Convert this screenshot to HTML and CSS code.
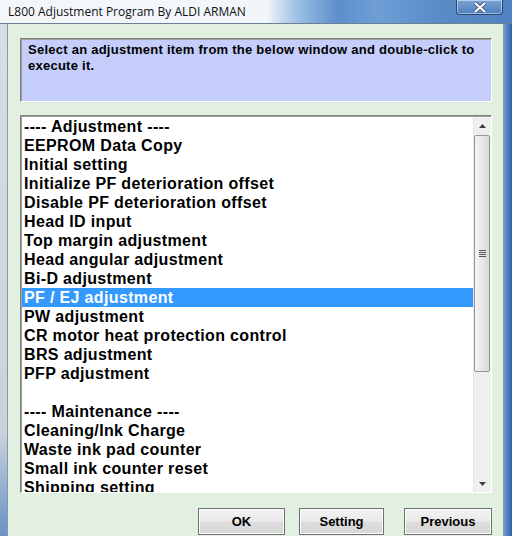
FILE: index.html
```html
<!DOCTYPE html>
<html lang="en">
<head>
    <meta charset="UTF-8">
    <title>L800 Adjustment Program By ALDI ARMAN</title>
    <link rel="stylesheet" href="styles.css">
</head>
<body>

<div class="window">
    <!-- Заголовок окна -->
    <div class="titlebar">
        <span class="title">L800 Adjustment Program By ALDI ARMAN</span>
        <div class="close">
            <svg width="14" height="11" viewBox="0 0 14 11">
                <path d="M2 1 L12 10 M12 1 L2 10" stroke="#3a4d66" stroke-width="3.6"/>
                <path d="M2 1 L12 10 M12 1 L2 10" stroke="#fff" stroke-width="2.2"/>
            </svg>
        </div>
    </div>

    <div class="frame">
        <div class="edge-left"></div>

        <div class="client">
            <div class="info">
                Select an adjustment item from the below window and double-click to execute it.
            </div>

            <div class="list">
                <ul class="items">
                    <li>---- Adjustment ----</li>
                    <li>EEPROM Data Copy</li>
                    <li>Initial setting</li>
                    <li>Initialize PF deterioration offset</li>
                    <li>Disable PF deterioration offset</li>
                    <li>Head ID input</li>
                    <li>Top margin adjustment</li>
                    <li>Head angular adjustment</li>
                    <li>Bi-D adjustment</li>
                    <li class="selected">PF / EJ adjustment</li>
                    <li>PW adjustment</li>
                    <li>CR motor heat protection control</li>
                    <li>BRS adjustment</li>
                    <li>PFP adjustment</li>
                    <li>&nbsp;</li>
                    <li>---- Maintenance ----</li>
                    <li>Cleaning/Ink Charge</li>
                    <li>Waste ink pad counter</li>
                    <li>Small ink counter reset</li>
                    <li>Shipping setting</li>
                </ul>

                <!-- Полоса прокрутки -->
                <div class="scrollbar">
                    <div class="arrow">
                        <svg width="7" height="4" viewBox="0 0 7 4"><path d="M0 4 L3.5 0 L7 4 Z" fill="#404040"/></svg>
                    </div>
                    <div class="track">
                        <div class="thumb">
                            <span class="grip"></span>
                        </div>
                    </div>
                    <div class="arrow">
                        <svg width="7" height="4" viewBox="0 0 7 4"><path d="M0 0 L3.5 4 L7 0 Z" fill="#404040"/></svg>
                    </div>
                </div>
            </div>

            <div class="buttons">
                <button class="btn btn-ok">OK</button>
                <button class="btn btn-setting">Setting</button>
                <button class="btn btn-prev">Previous</button>
            </div>
        </div>

        <div class="edge-right"></div>
    </div>
</div>

</body>
</html>
```

FILE: styles.css
```css
/* Основные стили */
body {
    margin: 0;
    width: 512px;
    height: 536px;
    overflow: hidden;
    font-family: "Liberation Sans", Arial, sans-serif;
    background: #e2f0e2;
}

.window {
    display: flex;
    flex-direction: column;
    height: 536px;
}

/* Заголовок */
.titlebar {
    height: 23px;
    display: flex;
    align-items: flex-start;
    background: linear-gradient(90deg, #f4f7fa 0%, #f2f6fa 52%, #9cc0e4 58%, #5d8fcb 66%, #6f9fd6 74%, #5a8cc8 85%, #4f82c0 100%);
    border-bottom: 1px solid #6c7f95;
}
.title {
    margin: 3px 0 0 8px;
    font-family: "Open Sans", "Noto Sans", sans-serif;
    font-size: 12px;
    color: #111;
    flex: 1;
}
.close {
    width: 45px;
    height: 14px;
    margin-right: 9px;
    display: flex;
    align-items: center;
    justify-content: center;
    border: 1px solid #2d4a6e;
    border-top: none;
    border-radius: 0 0 4px 4px;
    background: linear-gradient(#7aa3d3, #4d7fbd);
    box-shadow: inset 0 0 0 1px rgba(255, 255, 255, 0.45);
}

.frame {
    flex: 1;
    display: flex;
}
.edge-left {
    width: 7px;
    border-right: 1px solid #8a97a6;
    background: linear-gradient(#d7dde4, #c9d2dc 80%, #7fa2cc 95%, #6d93c4);
}
.edge-right {
    width: 8px;
    border-left: 1px solid #8a97a6;
    background: linear-gradient(90deg, #6f9ad0, #4c7fc0 50%, #2f5f9f);
}

.client {
    flex: 1;
    padding: 14px 11px 0 12px;
    background: #e2f0e2;
}

/* Блок с подсказкой */
.info {
    height: 59px;
    padding: 3px 6px 0 7px;
    background: #c5cdfb;
    border: 1px solid;
    border-color: #808080 #ffffff #ffffff #808080;
    box-shadow: inset 1px 1px 0 #a0a0a0;
    font-size: 13px;
    font-weight: bold;
    letter-spacing: 0.25px;
    line-height: 16px;
    color: #000;
}

/* Список */
.list {
    margin-top: 13px;
    height: 376px;
    display: flex;
    background: #fff;
    border: 1px solid;
    border-color: #808080 #ffffff #ffffff #808080;
    box-shadow: inset 1px 1px 0 #a0a0a0;
}
.items {
    flex: 1;
    margin: 1px 0 0 1px;
    padding: 0;
    list-style: none;
    overflow: hidden;
}
.items li {
    height: 19px;
    line-height: 19px;
    padding-left: 2px;
    font-size: 16px;
    font-weight: bold;
    letter-spacing: 0.35px;
    white-space: nowrap;
    color: #000;
}
.items li.selected {
    background: #3399ff;
    color: #fff;
}

.scrollbar {
    width: 17px;
    margin-top: 1px;
    display: flex;
    flex-direction: column;
    background: #efefef;
    border-left: 1px solid #e6e6e6;
}
.arrow {
    height: 17px;
    display: flex;
    align-items: center;
    justify-content: center;
}
.track {
    flex: 1;
    padding-top: 1px;
}
.thumb {
    height: 235px;
    margin: 0 1px 0 0;
    border: 1px solid #979797;
    border-radius: 2px;
    background: linear-gradient(90deg, #f3f3f3, #e8e8e8 50%, #d6d6d6);
    display: flex;
    align-items: center;
    justify-content: center;
}
.grip {
    width: 7px;
    height: 7px;
    background: repeating-linear-gradient(#555 0 1px, #e8e8e8 1px 2px);
}

/* Кнопки */
.buttons {
    margin-top: 15px;
    display: flex;
    justify-content: flex-end;
}
.btn {
    height: 27px;
    padding: 0;
    border: 1px solid #707070;
    border-radius: 0;
    background: linear-gradient(#f4f4f4, #e8e8e8 50%, #dcdcdc 51%, #d8d8d8);
    box-shadow: inset 0 0 0 1px #fcfcfc;
    font-family: "Liberation Sans", Arial, sans-serif;
    font-size: 13px;
    font-weight: bold;
    color: #000;
}
.btn-ok {
    width: 87px;
}
.btn-setting {
    width: 85px;
    margin-left: 14px;
}
.btn-prev {
    width: 88px;
    margin-left: 20px;
}
```
